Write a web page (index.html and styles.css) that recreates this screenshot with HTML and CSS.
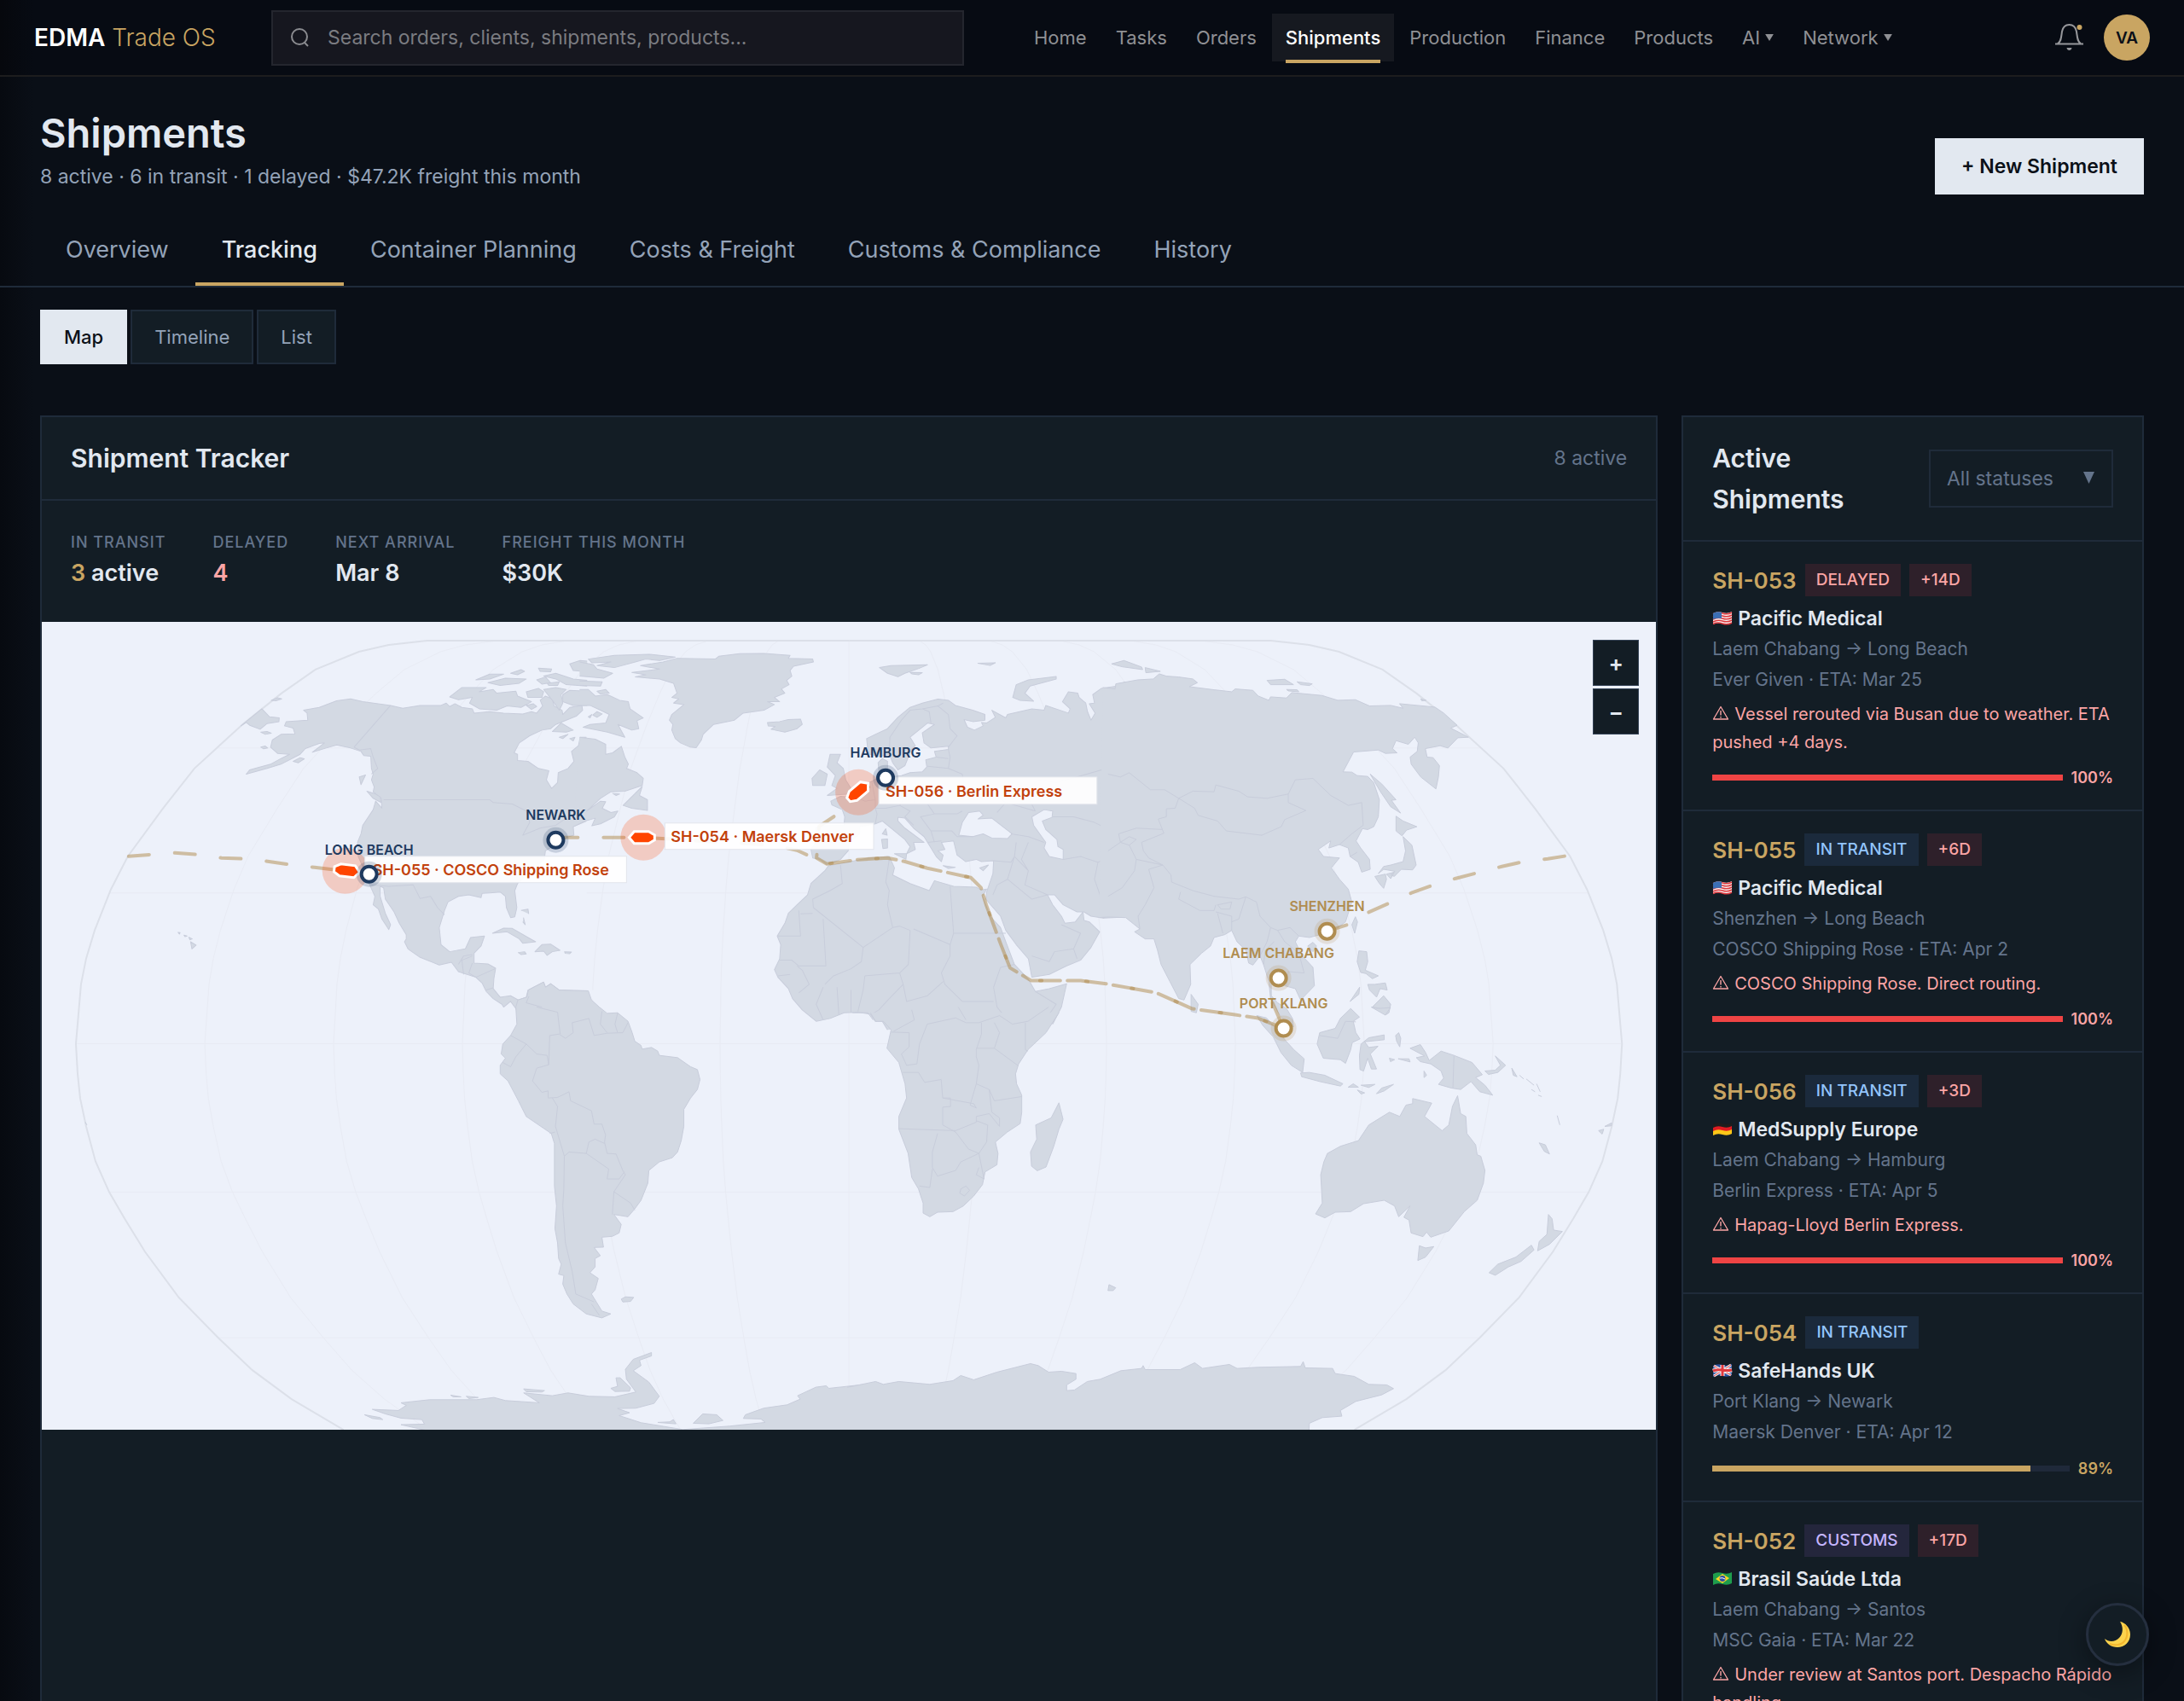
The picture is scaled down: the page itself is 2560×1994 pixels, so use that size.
FILE: index.html
```html
<!DOCTYPE html>
<html lang="en">
<head>
<meta charset="utf-8">
<meta name="viewport" content="width=device-width, initial-scale=1">
<title>EDMA Trade OS – Shipments</title>
<link rel="stylesheet" href="styles.css">
</head>
<body>
<svg class="defs" aria-hidden="true">
  <symbol id="flag-us" viewBox="0 0 24 18">
    <path d="M1 3Q6 0 12 2T23 1V14Q18 17 12 15T1 16Z" fill="#f4f4f4"/>
    <path d="M1 4Q6 1 12 3T23 2M1 7Q6 4 12 6T23 5M1 10Q6 7 12 9T23 8M1 13Q6 10 12 12T23 11M1 15.500Q6 13 12 15T23 14" stroke="#e0393e" stroke-width="1.500" fill="none"/>
    <path d="M1 3Q6 0 11 2V9Q6 8 1 10Z" fill="#3b6fb5"/>
  </symbol>
  <symbol id="flag-de" viewBox="0 0 24 18">
    <path d="M1 3Q6 0 12 2T23 1V6Q18 9 12 7T1 8Z" fill="#1d1d1d"/>
    <path d="M1 7Q6 4 12 6T23 5V10Q18 13 12 11T1 12Z" fill="#e01b22"/>
    <path d="M1 11Q6 8 12 10T23 9V14Q18 17 12 15T1 16Z" fill="#fbc618"/>
  </symbol>
  <symbol id="flag-uk" viewBox="0 0 24 18">
    <path d="M1 3Q6 0 12 2T23 1V14Q18 17 12 15T1 16Z" fill="#2a4f9e"/>
    <path d="M2 3L22 14M22 2L2 15" stroke="#f4f4f4" stroke-width="3"/>
    <path d="M2 3L22 14M22 2L2 15" stroke="#e0393e" stroke-width="1"/>
    <path d="M12 2V15M1 9Q6 7 12 8T23 8" stroke="#f4f4f4" stroke-width="5" fill="none"/>
    <path d="M12 2V15M1 9Q6 7 12 8T23 8" stroke="#e0393e" stroke-width="3" fill="none"/>
  </symbol>
  <symbol id="flag-br" viewBox="0 0 24 18">
    <path d="M1 3Q6 0 12 2T23 1V14Q18 17 12 15T1 16Z" fill="#1f9d4d"/>
    <path d="M4 9L12 3L20 8L12 14Z" fill="#fbd723"/>
    <circle cx="12" cy="8.500" r="3.400" fill="#2c4fa3"/>
    <path d="M9 8Q12 7 15 9" stroke="#fff" fill="none"/>
  </symbol>
  <symbol id="warning" viewBox="0 0 20 17">
    <path d="M10 1.500L18.500 16H1.500Z" fill="none" stroke="currentColor" stroke-width="1.300" stroke-linejoin="round"/>
    <path d="M10 6V11.500M10 13V14.500" stroke="currentColor" stroke-width="1.400"/>
  </symbol>
</svg>

<header class="topbar">
  <a class="logo" href="#"><strong>EDMA</strong> Trade OS</a>
  <label class="search">
    <svg viewBox="0 0 24 24" aria-hidden="true"><circle cx="11" cy="11" r="9"/><path d="M17 18L21 22"/></svg>
    <input type="search" aria-label="Search" placeholder="Search orders, clients, shipments, products...">
  </label>
  <nav class="nav">
    <a href="#">Home</a>
    <a href="#">Tasks</a>
    <a href="#">Orders</a>
    <a href="#" class="active">Shipments</a>
    <a href="#">Production</a>
    <a href="#">Finance</a>
    <a href="#">Products</a>
    <a href="#">AI <svg class="caret" viewBox="0 0 11 9"><path d="M0 0H11L5.500 9Z"/></svg></a>
    <a href="#">Network <svg class="caret" viewBox="0 0 11 9"><path d="M0 0H11L5.500 9Z"/></svg></a>
  </nav>
  <div class="user">
    <button class="bell" aria-label="Notifications">
      <svg viewBox="0 0 36 36"><path d="M1 25.500H34M4 25C8 23 8 18 9 11C10 6 13 3 17.500 3S25 6 26 11C27 18 27 23 31 25"/><path class="clapper" d="M14.500 30H20.500C20 34 15 34 14.500 30Z"/><circle class="dot" cx="29.500" cy="6" r="3"/></svg>
    </button>
    <button class="avatar">VA</button>
  </div>
</header>

<main class="page">
  <div class="page-head">
    <div>
      <h1>Shipments</h1>
      <p>8 active · 6 in transit · 1 delayed · $47.2K freight this month</p>
    </div>
    <button class="primary">+ New Shipment</button>
  </div>

  <nav class="tabs">
    <a href="#">Overview</a>
    <a href="#" class="active">Tracking</a>
    <a href="#">Container Planning</a>
    <a href="#">Costs &amp; Freight</a>
    <a href="#">Customs &amp; Compliance</a>
    <a href="#">History</a>
  </nav>

  <div class="views">
    <button class="active">Map</button>
    <button>Timeline</button>
    <button>List</button>
  </div>

  <div class="columns">
    <section class="card tracker">
      <div class="card-head">
        <h2>Shipment Tracker</h2>
        <span class="count">8 active</span>
      </div>
      <dl class="stats">
        <div><dt>IN TRANSIT</dt><dd><span class="gold">3</span> active</dd></div>
        <div><dt>DELAYED</dt><dd class="red">4</dd></div>
        <div><dt>NEXT ARRIVAL</dt><dd>Mar 8</dd></div>
        <div><dt>FREIGHT THIS MONTH</dt><dd>$30K</dd></div>
      </dl>
      <div class="map">
        <svg class="world" viewBox="0 0 1894 948" role="img" aria-label="World map of shipments">
          <defs>
            <path id="rim" d="M0 22H-495L-540 27L-575 35L-626 56L-666 84L-711 120L-768 172L-805 219L-846 275L-866 314L-885 362L-895 395L-901 425L-905 472L-907 495L-905 530L-902 559L-895 592L-884 633L-868 669L-850 700L-826 739L-786 793L-740 840L-700 878L-654 912L-593 948"/>
            <path id="ship" d="M-15 -3L-8 -7H9L15 0L9 7H-8L-15 3Z"/>
          </defs>

          <g class="graticule" transform="translate(947 0)">
            <use href="#rim" transform="scale(.1667 1)"/><use href="#rim" transform="scale(.3333 1)"/>
            <use href="#rim" transform="scale(.5 1)"/><use href="#rim" transform="scale(.6667 1)"/>
            <use href="#rim" transform="scale(.8333 1)"/>
            <use href="#rim" transform="scale(-.1667 1)"/><use href="#rim" transform="scale(-.3333 1)"/>
            <use href="#rim" transform="scale(-.5 1)"/><use href="#rim" transform="scale(-.6667 1)"/>
            <use href="#rim" transform="scale(-.8333 1)"/>
            <path d="M0 22V948M-742 148H742M-868 318H868M-907 495H907M-868 669H868M-740 840H740"/>
            <use class="rim" href="#rim"/><use class="rim" href="#rim" transform="scale(-1 1)"/>
          </g>

          <!-- North America -->
          <g class="land" transform="translate(-1 -8) scale(.40816 .33333)">
            <path d="M1568 430L1550 430L1545 460L1525 480L1532 515L1515 540L1487 555L1485 590L1468 610L1453 580L1460 548L1430 540L1400 515L1370 512L1370 490L1360 485L1375 450L1405 425L1440 405L1465 400L1480 385L1510 370L1540 355L1557 335L1555 318L1520 325L1500 350L1498 335L1475 320L1470 295L1450 285L1435 300L1442 320L1425 345L1410 340L1385 348L1330 345L1290 340L1245 345L1240 330L1210 325L1190 312L1175 322L1165 310L1150 318L1090 318L1040 328L1005 318L925 305L890 295L850 302L800 325L755 335L765 345L767 370L705 375L700 390L725 398L730 418L690 420L665 440L660 465L680 487L715 490L690 505L660 525L600 545L590 560L650 540L690 525L745 490L760 470L800 452L815 450L780 483L820 468L850 457L890 468L920 480L928 495L948 497L950 540L955 560L950 580L958 605L955 622L978 645L980 680L962 655L955 685L925 740L920 770L910 800L912 850L930 900L945 950L960 990L955 1020L970 1035L980 1070L1000 1107L1005 1090L990 1050L975 990L975 955L985 960L990 1000L1015 1045L1030 1085L1050 1125L1050 1140L1045 1150L1055 1175L1090 1205L1145 1232L1180 1222L1200 1255L1250 1275L1268 1295L1280 1325L1300 1350L1325 1370L1330 1380L1350 1360L1365 1385L1385 1440L1540 1440"/>
            <path class="coast" d="M1568 725L1530 745L1532 775L1505 785L1490 800L1450 830L1447 860L1400 910L1370 945L1362 970L1368 1030L1362 1062L1350 1065L1338 1030L1335 990L1320 975L1290 978L1268 980L1265 995L1230 985L1200 990L1170 1010L1160 1040L1145 1100L1150 1160L1175 1185L1220 1175L1235 1135L1275 1130L1265 1165L1245 1190L1245 1225L1285 1228L1307 1243L1302 1280L1300 1315L1320 1345L1350 1340L1372 1355L1395 1345L1400 1320L1445 1292L1450 1310L1465 1298L1490 1320L1530 1322L1570 1322"/>
            <path d="M1298 1120L1330 1102L1355 1103L1400 1135L1422 1150L1385 1155L1375 1140L1340 1115ZM1420 1185L1440 1160L1465 1158L1492 1180L1470 1185L1455 1198L1445 1183ZM1372 1188L1390 1185L1395 1193L1380 1195ZM1505 1185L1525 1186L1520 1192L1507 1191Z"/>
            <path d="M1380 1040L1400 1035L1402 1052M1387 1065L1392 1090L1385 1080"/>
            <path d="M430 1150L446 1162L434 1175ZM394 1117L400 1118L398 1123ZM411 1127L420 1130L414 1132ZM425 1134L435 1140L428 1143Z"/>
            <path d="M575 390L635 330L657 358L685 362L684 375L650 382L630 402L600 388L590 378ZM662 300L680 291L692 295L675 302ZM632 412L650 410L662 416L645 420ZM632 465L645 461L652 468L640 471ZM725 515L745 502L757 506L740 520Z"/>
            <path d="M915 570L933 563L920 597ZM937 620L962 630L975 640L978 660L955 645Z"/>
            <path d="M1175 288L1210 255L1280 255L1260 270L1300 262L1310 275L1365 268L1370 285L1410 305L1380 325L1340 320L1310 335L1260 330L1232 310L1240 290L1200 298ZM1250 228L1290 208L1330 208L1290 225ZM1285 238L1335 222L1395 225L1375 240L1320 248ZM1350 205L1380 192L1390 198L1370 210ZM1430 187L1468 190L1465 200L1435 198ZM1395 270L1430 258L1445 270L1440 290L1400 290ZM1425 228L1450 218L1465 238L1440 243ZM1445 262L1480 255L1510 262L1495 280L1500 310L1490 335L1470 300ZM1395 318L1415 312L1425 322L1410 332ZM1470 410L1495 380L1530 405L1510 412ZM1490 430L1515 420L1500 435ZM1520 435L1535 430L1530 443ZM1455 240L1490 235L1485 248L1460 248Z"/>
            <path d="M1570 250L1510 245L1480 225L1445 215L1480 205L1530 225L1570 230M1570 200L1530 195L1520 172L1550 160L1570 162M1570 268L1520 265L1500 280L1500 305L1530 318L1570 318"/>
            <path class="border" d="M900 465L1005 318M900 465L915 475L948 470L955 500L968 540L950 560M985 650H1290L1300 660L1355 665L1395 690L1405 730L1385 775L1435 750L1480 740L1510 715M948 950L1000 955L1070 950L1090 998L1120 990L1140 1030L1160 1055M1215 1265L1210 1215L1240 1200M1240 1225L1230 1260L1250 1275L1305 1245M1280 1320L1300 1312M1200 1230L1215 1200L1240 1195"/>
          </g>
          <g class="land" transform="translate(631 -8) scale(.40816 .33333)">
            <path d="M0 430L45 437L75 455L75 490L95 485L120 462L130 500L140 525L135 540L165 555L183 575L180 600L130 620L90 622L60 645L20 690L60 655L75 657L65 680L90 695L110 690L100 710L60 735L35 742L45 715L15 725L-18 745"/>
            <path d="M125 670L180 603L172 635L195 650L195 688L150 680ZM95 628L115 630L105 635Z"/>
            <path d="M0 262L25 262L45 285L80 280L115 300L140 305L145 330L183 362L165 372L170 400L150 405L110 385L130 430L80 412L10 395L30 385L75 380L85 350L60 335L30 318L0 318M38 352L50 340L65 348L50 360ZM0 232L65 235L60 250L0 248M0 165L40 175L50 190L95 205L70 222L0 215M25 155L100 142L200 138L275 148L230 160L190 155L160 165L100 185L50 178L90 165L35 168ZM50 268L75 262L85 275L60 278ZM25 358L35 350L30 362Z"/>
            <path d="M150 202L230 190L175 178L240 165L280 152L390 155L400 145L460 136L530 135L605 142L600 152L670 155L672 165L615 180L605 195L610 215L595 230L602 245L580 260L590 275L560 290L575 305L540 305L560 315L530 335L470 345L445 370L385 385L355 420L350 440L335 467L318 465L290 450L275 435L265 405L268 385L258 370L265 350L300 315L270 310L285 295L265 290L280 275L270 240L230 225L160 218L190 210Z"/>
            <path d="M540 378L575 375L600 368L635 366L640 385L625 400L590 412L550 402L562 392L542 390Z"/>
          </g>

          <!-- South America and the Antarctic Peninsula -->
          <g class="land" transform="translate(-1 452) scale(.61224 .33333)">
            <path class="sea-mask" d="M1025 -60L1045 -58L1060 -20L1070 0L1085 22L1105 20L1125 50V-60Z"/>
            <path d="M914 -25L931 -35L934 -60L963 -88L967 -70L977 -82L993 -60L1049 -57L1055 -25L1070 0L1085 22L1105 20L1125 50L1133 90L1138 120L1150 135L1152 148L1170 142L1182 155L1185 170L1220 178L1245 210L1258 220L1263 255L1258 290L1245 320L1232 360L1232 420L1227 470L1220 510L1210 530L1185 545L1165 575L1163 620L1150 680L1138 710L1125 738L1098 730L1112 765L1108 795L1095 807L1075 810L1078 845L1060 846L1072 875L1062 885L1062 915L1052 935L1068 955L1062 995L1055 1010L1065 1040L1075 1070L1092 1080L1075 1094L1045 1080L1020 1045L1008 1010L1000 975L1002 945L992 940L997 905L992 885L990 830L985 780L988 700L984 630L984 480L978 445L930 385L915 330L895 260L880 235L880 205L890 180L882 165L885 130L900 100L912 60L910 0Z"/>
            <path d="M1112 1028L1120 1020L1136 1022L1130 1036L1115 1038ZM785 1366L805 1372L790 1372ZM815 1370L838 1374L820 1378ZM925 1344L965 1350L960 1355L930 1354ZM1092 1342L1105 1335L1102 1305L1110 1305L1130 1340L1128 1352L1100 1353ZM620 1435L650 1445L655 1452L635 1448ZM1250 1465L1268 1432L1295 1435L1307 1455L1280 1467ZM1182 1462L1205 1460L1212 1452L1217 1467Z"/>
            <path d="M85 405L88 415"/>
            <path d="M738 1490L690 1470L735 1468L730 1452L690 1447L660 1432L635 1416L685 1420L700 1402L690 1393L745 1382L835 1382L868 1374L890 1385L955 1393L925 1358L980 1368L1010 1358L1050 1370L1100 1372L1140 1355L1122 1310L1120 1275L1135 1240L1170 1216L1170 1228L1147 1243L1150 1262L1135 1280L1165 1320L1185 1370L1175 1395L1140 1412L1105 1413L1128 1428L1108 1438L1150 1463L1230 1487L1320 1475L1388 1462L1380 1450L1346 1448L1350 1435L1385 1412L1430 1400L1455 1380L1450 1368L1485 1338L1505 1333L1510 1342L1545 1335L1580 1328L1580 1500"/>
            <path class="border" d="M885 195L900 210L910 175L930 130L950 165L970 170L973 203L950 215L942 260L960 300L972 295L972 320L990 318L1012 298L1015 330L1055 365L1060 412L1075 412L1082 450L1080 475L1085 515L1102 517L1115 575L1120 590L1098 650L1130 690L1138 715M900 100L930 130M973 203L975 100L993 95L1005 110L1020 90L1018 55L1050 40L1060 100L1085 92L1115 90L1125 55M950 0L990 18L995 95M1075 15L1072 60L1085 90M1105 22L1100 60L1105 90M980 320L990 350L986 420L1003 525L1012 510L1045 515L1050 475L1062 465L1080 480M1045 515L1088 570L1085 605L1108 605L1118 580M1003 525L1002 640L1000 700L1005 830L1018 930L1025 1010L1060 1038M1098 650L1095 730M975 445L985 440M1055 1045L1070 1085M935 -38L930 -15L960 0"/>
          </g>

          <!-- Europe, western Asia, northern Africa -->
          <g class="land" transform="translate(631 -8) scale(.40816 .33333)">
            <path d="M1568 235L1545 250L1500 258L1475 280L1480 310L1465 312L1482 345L1470 370L1460 340L1455 310L1436 290L1432 275L1405 270L1388 305L1410 330L1405 345L1340 318L1335 335L1300 330L1265 340L1230 350L1225 362L1185 335L1195 360L1170 380L1155 378L1160 390L1135 405L1115 395L1105 368L1130 375L1165 370L1165 350L1130 335L1080 318L1060 300L1030 296L985 310L950 325L915 360L885 400L850 420L825 435L828 470L835 490L860 498L890 490L900 520L915 545L935 530L945 500L955 470L965 460L950 430L975 405L1000 380L1020 385L985 415L990 450L1010 468L1060 462L1060 473L1020 480L1025 500L995 510L998 535L985 552L950 555L925 565L900 570L885 555L885 515L870 505L858 520L862 570L840 585L800 610L770 640L750 638L722 655L725 668L755 685L762 710L760 740L690 742L678 750L685 790L665 825L670 855L690 860L710 878L730 870L750 860L772 830L775 800L805 770L805 745L850 735L870 725L900 755L935 790L950 815L940 840L965 825L960 800L990 800L935 750L915 725L915 712L935 715L960 750L990 780L1010 820L1025 850L1040 868L1045 845L1030 830L1050 825L1040 800L1075 795L1080 820L1085 845L1110 868L1140 860L1155 868L1190 865L1188 910L1170 975L1168 1000L1178 1015L1210 1060L1225 1110L1255 1160L1290 1210L1300 1275L1350 1265L1400 1235L1440 1215L1470 1170L1495 1115L1465 1080L1450 1075L1447 1045L1425 1080L1395 1085L1385 1060L1360 1020L1345 985L1365 985L1390 1020L1430 1045L1450 1045L1470 1060L1505 1067L1568 1063"/>
            <path class="sea" d="M1090 775L1100 730L1118 695L1150 690L1160 705L1145 718L1185 715L1243 770L1230 787L1185 785L1160 770L1130 780ZM1300 710L1335 685L1360 690L1358 712L1330 725L1340 755L1372 790L1375 815L1390 825L1390 860L1350 850L1335 820L1340 800L1305 740Z"/>
            <path d="M720 490L750 490L740 520L758 540L765 580L780 610L775 630L712 635L740 610L725 600L735 565L712 535ZM670 600L668 575L690 545L712 560L705 600ZM862 185L895 178L1000 175L975 188L935 205L915 217L885 205ZM950 202L985 203L975 210L955 207ZM1145 170L1195 168L1180 177ZM1245 290L1255 245L1290 228L1370 216L1370 225L1295 250L1280 275L1305 303L1265 300ZM870 770L880 752L884 775ZM868 790L885 788L885 820L872 822ZM905 840L940 840L938 860ZM1045 882L1080 888L1060 892ZM1150 890L1175 880L1160 900Z"/>
            <path d="M1360 1440L1385 1380L1400 1298L1350 1315L1310 1325L1290 1282L1250 1230L1225 1150L1210 1100L1180 1060L1158 990L1170 965L1155 968L1140 958L1075 955L1020 935L1005 970L950 945L900 915L905 890L890 850L830 855L770 870L715 883L705 900L665 945L655 985L625 1020L600 1050L590 1085L568 1130L578 1160L575 1210L560 1248L570 1275L600 1315L612 1350L640 1390L680 1430L720 1420L760 1400L800 1398L835 1405L850 1430L870 1430L885 1460"/>
            <path class="border" d="M890 490L892 430L925 370L950 335L985 330L1030 320L1045 310M1010 380L1005 340L985 330M1030 320L1060 350L1065 400L1085 425L1060 465M1060 473L1065 500L1060 540L1000 532M1025 500L1060 505M1060 540L1100 560L1105 600L1080 625L1050 620L970 630L965 580M840 585L845 620L850 650L820 655L790 640M850 650L850 680L880 680L920 670L935 640L970 630M850 680L855 700L850 735M920 670L950 690L935 710L960 740M970 630L960 660L1000 665L1040 640L1050 620M1000 665L1020 700L980 710L1010 760L1020 800M1020 700L1085 700L1100 690M1010 760L1070 760L1085 780M1000 800L1040 795M1105 600L1180 625L1225 660L1200 695M1225 660L1310 690M1240 770L1290 780L1335 800M1255 800L1250 850L1240 870L1190 865M1250 850L1230 930L1200 950L1188 985M1230 930L1300 1000L1345 985M1250 850L1290 900L1280 950L1345 985M1290 900L1270 860L1290 800M1390 860L1440 850L1490 870L1480 930L1500 1000L1530 1040L1505 1067M1490 870L1530 850L1568 850M1360 710L1420 710L1480 730L1530 760L1568 760M1310 690L1280 620L1320 580L1370 590L1430 570L1500 545L1568 565M1300 1200L1350 1220L1365 1185L1420 1175L1430 1210M1420 1175L1440 1120L1385 1090M672 1030L815 1170L900 1100L885 1020L890 970L880 940L890 860M815 1170L810 1220L780 1245L730 1270L705 1300M672 1030L670 1000L720 970L755 945L750 880M630 1040L635 1130H570M670 1050L635 1052M700 1070L708 1235H630L610 1215L575 1215M960 1105L1065 1160V1200L1040 1260L1050 1300L1100 1360M900 1100L920 1095L950 1110L945 1230L920 1260L820 1270M1065 955L1075 1120L1225 1120M1075 1120L1065 1160M920 1260L930 1300L890 1350L860 1390L840 1405M930 1300L940 1360L1000 1340L1045 1290M780 1320L780 1400M740 1310L745 1405M700 1310L680 1370L700 1425M570 1270L605 1265M630 1330L660 1300L640 1250L625 1235M1310 1325L1370 1370L1330 1440M1190 1310L1200 1380L1240 1440M1250 1230L1210 1240L1190 1310M820 1270L815 1320L800 1395M1100 1360L1190 1360M1085 780L1130 780"/>
          </g>

          <!-- Central and eastern Asia -->
          <g class="land" transform="translate(1251 -8) scale(.41455 .33333)">
            <path d="M-15 255L20 260L22 242L85 228L128 225L145 207L165 215L200 218L240 225L253 238L230 252L300 263L350 270L360 260L410 265L425 285L455 300L460 288L505 292L520 273L605 283L650 300L700 298L740 320L800 318L835 328L825 312L925 324L950 345L988 388L970 398L1020 430L990 432L962 468L940 460L898 470L903 500L920 502L938 530L935 570L928 612L885 570L858 525L855 500L875 480L878 450L868 430L850 455L815 442L805 470L818 485L785 487L765 475L695 482L665 552L690 553L705 565L735 568L752 590L768 650L765 710L752 745L735 755L720 752L702 795L715 820L740 860L742 895L718 905L708 870L685 850L680 820L655 808L625 820L630 795L595 825L610 850L655 855L632 890L655 930L680 965L690 1010L672 1080L640 1110L600 1125L570 1135L540 1130L530 1150L550 1200L580 1240L584 1305L545 1355L530 1315L500 1305L475 1260L462 1300L462 1340L480 1365L505 1385L522 1420L525 1450L505 1440L482 1400L460 1350L455 1290L440 1230L430 1200L410 1232L398 1225L390 1180L365 1150L350 1110L330 1125L300 1135L290 1165L265 1190L232 1230L234 1300L215 1355L200 1350L175 1290L150 1230L140 1180L130 1140L105 1140L75 1115L90 1105L75 1090L50 1065L0 1063L-25 1065"/>
            <path d="M235 1335L255 1370L250 1400L235 1395ZM700 1062L706 1080L698 1120L690 1090ZM565 1165L580 1152L590 1165L580 1185ZM815 708L835 725L874 745L845 757L832 777L815 760ZM835 780L860 810L872 880L862 897L830 895L810 920L800 915L812 902L780 895L765 910L780 885L800 880L835 868L842 830ZM755 920L785 912L788 930L780 962L768 945ZM788 912L810 905L800 928ZM742 560L775 595L815 650L802 652L828 697L800 675L770 620ZM710 1182L732 1185L735 1220L728 1250L765 1270L748 1280L730 1262L715 1258L705 1220ZM735 1300L755 1300L785 1295L790 1320L770 1315L760 1345L740 1320ZM748 1380L780 1340L800 1370L795 1400L785 1408L770 1385ZM712 1310L685 1360L710 1335ZM10 172L45 160L95 183L98 192L40 182ZM105 185L148 198L107 203ZM450 230L500 226L525 245L460 245ZM535 235L578 242L570 248L545 245ZM505 262L535 263L540 270L510 267ZM885 295L900 300L888 302Z"/>
            <path class="border" d="M0 560L35 570L60 555L120 615L160 615L200 645L240 620L300 622L305 598L370 620L395 640L450 645L510 630L530 580L580 575L630 635L680 670L718 660L722 740M200 645L245 680L255 705L310 725L335 760L435 775L490 745L500 720L560 688L510 660V630M200 645L190 680L165 682L165 710L142 718L158 768L95 800L100 830L115 855L155 880L178 915L180 940L240 970L300 990L370 1000L390 992L420 1010L430 1060L460 1100L480 1110L515 1100L540 1130M0 830L35 800L30 770L80 750L155 755M35 800L60 780L80 790L60 810ZM60 810L80 860L155 880M80 860L75 900L40 960L0 990M155 880L115 895L130 960L105 1020L85 1060L90 1105M205 975L200 1000L260 1040L300 1040L305 1020M310 1020L350 1010L345 1035L320 1035ZM305 1045L350 1060L350 1110M310 1050L325 1120M390 992L370 1070L350 1080M430 1200L450 1150L460 1100M480 1110L500 1150L540 1190L555 1260L510 1255L505 1305M440 1230L445 1180L470 1150M655 808L690 770L722 740M685 850L705 835"/>
          </g>

          <!-- Southern Africa, Oceania, eastern Antarctica -->
          <g class="land" transform="translate(951 452) scale(.60588 .33333)">
            <path d="M35 20L45 50L60 50L75 80L67 145L90 195L102 270L105 320L90 385L90 430L108 515L115 600L128 640L137 690L137 725L150 738L165 722L195 720L215 700L235 665L252 625L257 580L280 555L282 515L277 475L300 440L325 410L328 370L328 310L318 270L316 235L322 200L340 150L375 90L400 20"/>
            <path d="M400 337L408 395L400 430L390 490L375 563L358 576L347 560L345 510L357 465L355 415L385 390ZM497 977L510 988L505 998L495 998Z"/>
            <path d="M783 30L802 38L815 65L840 120L855 150L875 182L872 230L850 205L830 160L815 105L795 65ZM868 232L885 230L915 240L950 270L945 278L905 262L870 245ZM965 5L982 35L970 50L975 90L983 112L968 125L965 150L955 198L945 185L912 180L900 130L905 90L935 75L945 40ZM985 130L1000 108L1030 98L1030 115L992 122L1000 142L1018 138L1003 165L1015 218L1005 218L998 180L990 225L983 220L982 170ZM960 282L970 270L980 282ZM985 275L1012 272L1000 283ZM978 292L992 302L985 306ZM1015 305L1025 285L1048 272L1030 295ZM1040 180L1050 185L1042 192ZM1057 182L1078 182L1080 193ZM1052 100L1058 90L1062 110L1060 140L1054 120ZM1107 225L1112 240L1107 248ZM1005 0L1018 5L1042 2L1032 28Z"/>
            <path d="M1080 145L1100 132L1110 160L1117 188L1140 155L1165 170L1200 195L1220 238L1207 248L1225 275L1240 310L1215 298L1198 262L1178 290L1160 285L1135 272L1145 250L1140 225L1120 200L1100 192L1092 178L1108 172ZM1225 225L1245 222L1255 205L1245 172L1265 205L1250 230L1232 237ZM1277 215L1287 245L1280 240ZM1292 240L1300 253M1305 253L1320 275M1315 290L1322 298M1325 270L1332 298M1328 310L1335 315M1365 382L1370 415M1457 420L1470 408L1470 418ZM1445 435L1455 430L1452 447ZM1330 478L1342 485L1350 517L1340 508Z"/>
            <path d="M1172 312L1178 375L1188 385L1190 445L1207 485L1210 520L1217 525L1225 575L1222 620L1210 680L1185 720L1155 788L1120 810L1112 792L1105 808L1082 795L1078 750L1068 740L1080 700L1058 738L1050 700L1030 680L990 692L965 720L935 722L915 742L897 728L910 690L907 590L913 545L920 515L945 490L980 470L1000 415L1040 370L1060 385L1072 345L1085 340L1085 322L1122 338L1108 385L1142 435L1155 415L1162 350ZM1098 840L1110 848L1126 843L1110 880L1095 892ZM1348 730L1355 745L1358 785L1375 790L1350 835L1327 858L1330 825L1345 800ZM1315 838L1320 855L1295 895L1270 915L1245 944L1233 935L1250 905L1285 880Z"/>
            <path d="M-10 1338L0 1335L45 1318L60 1328L90 1318L150 1328L195 1315L210 1297L235 1312L280 1285L345 1255L360 1262L380 1285L405 1282L433 1290L433 1310L415 1330L415 1350L430 1348L455 1318L480 1310L520 1280L560 1272L563 1262L567 1276L635 1276L663 1252L678 1272L730 1258L745 1272L785 1268L868 1265L873 1248L877 1270L930 1272L935 1290L972 1300L1000 1328L1035 1330L1048 1343L1025 1365L975 1388L945 1420L948 1440L910 1445L885 1465L884 1500L-10 1500"/>
            <path class="border" d="M75 88L110 90L110 140L95 165L105 205L125 200L130 130L145 60L200 38L220 55L245 55L285 30M205 0L220 45M285 30L310 60L340 50L380 0M250 55V95L240 150V175L245 205L240 270L228 345L240 355L235 340L175 320L172 255L140 265L128 230H98M275 55L285 90L275 145L240 145M275 145L320 205M335 55V150L340 155M240 270L265 290L275 330L328 315M265 290L270 370L285 390L285 420L265 375L240 385L240 405L200 435L90 428M175 320L190 320V350L175 352V415L200 440M240 400L262 415L260 475L245 515L210 545L200 575L165 595L155 565L155 510L165 445M200 440L225 500L245 515L250 560L255 605L240 590L245 565M155 570L150 635L130 630M210 640L220 630L227 645L217 665L208 655ZM0 20L30 20L40 45M115 10L120 45L80 85M905 100L940 110L955 50L975 52M1165 172L1163 285"/>
          </g>

          <g class="routes">
            <path d="M1508 363L1533 355L1556 341L1583 329L1607 318L1632 309L1659 301L1686 294L1713 287L1740 281L1767 278L1792 274"/>
            <path d="M102 275L128 273L156 271L183 273L211 277L238 278L265 281L293 285L320 288L346 291"/>
            <path d="M1457 477L1427 465L1400 461L1350 454L1307 435L1251 425L1219 421H1161L1136 406L1125 378L1108 332L1102 312L1090 300L1039 289L1012 281L992 277L957 279L921 284L886 268L857 262L706 253H603"/>
            <path stroke-dashoffset="21" d="M1451 417L1441 440L1457 477L1427 465L1400 461L1350 454L1307 435L1251 425L1219 421H1161L1136 406L1125 378L1108 332L1102 312L1090 300L1039 289L1012 281L992 277L957 279L921 284L909 277L912 240L939 222L958 200L990 183"/>
          </g>

          <g class="vessels">
            <circle class="halo" cx="356" cy="292" r="27"/>
            <circle class="halo" cx="706" cy="253" r="27"/>
            <circle class="halo" cx="958" cy="200" r="27"/>
            <rect x="379" y="275" width="307" height="31"/>
            <rect x="731" y="236" width="245" height="31"/>
            <rect x="982" y="182" width="256" height="32"/>
            <text x="388" y="297">SH-055 · COSCO Shipping Rose</text>
            <text x="738" y="258">SH-054 · Maersk Denver</text>
            <text x="990" y="205">SH-056 · Berlin Express</text>
            <use href="#ship" transform="translate(358 292) rotate(7)"/>
            <use href="#ship" transform="translate(704 253) rotate(180)"/>
            <use href="#ship" transform="translate(958 199) rotate(-40)"/>
          </g>

          <g class="ports dest">
            <circle class="glow" cx="384" cy="296" r="15"/><circle cx="384" cy="296" r="9"/>
            <circle class="glow" cx="603" cy="256" r="15"/><circle cx="603" cy="256" r="9"/>
            <circle class="glow" cx="990" cy="183" r="15"/><circle cx="990" cy="183" r="9"/>
            <text x="384" y="273">LONG BEACH</text>
            <text x="603" y="232">NEWARK</text>
            <text x="990" y="159">HAMBURG</text>
          </g>
          <g class="ports origin">
            <circle class="glow" cx="1508" cy="363" r="15"/><circle cx="1508" cy="363" r="9"/>
            <circle class="glow" cx="1451" cy="418" r="15"/><circle cx="1451" cy="418" r="9"/>
            <circle class="glow" cx="1457" cy="477" r="15"/><circle cx="1457" cy="477" r="9"/>
            <text x="1508" y="339">SHENZHEN</text>
            <text x="1451" y="394">LAEM CHABANG</text>
            <text x="1457" y="453">PORT KLANG</text>
          </g>
        </svg>
        <div class="zoom">
          <button aria-label="Zoom in">+</button>
          <button aria-label="Zoom out">−</button>
        </div>
      </div>
    </section>

    <section class="card list">
      <div class="card-head">
        <h2>Active Shipments</h2>
        <span class="select">
          <select aria-label="Status filter"><option>All statuses</option></select>
          <svg viewBox="0 0 13 14" aria-hidden="true"><path d="M0 0H13L6.500 14Z"/></svg>
        </span>
      </div>

      <article class="item">
        <div class="tags"><a href="#">SH-053</a><span class="tag late">DELAYED</span><span class="tag late">+14D</span></div>
        <h3><svg class="flag"><use href="#flag-us"/></svg>Pacific Medical</h3>
        <p>Laem Chabang → Long Beach</p>
        <p>Ever Given · ETA: Mar 25</p>
        <p class="alert"><svg class="warn"><use href="#warning"/></svg>Vessel rerouted via Busan due to weather. ETA pushed +4 days.</p>
        <div class="progress late"><div class="track"><div class="fill" style="width:100%"></div></div><span>100%</span></div>
      </article>

      <article class="item">
        <div class="tags"><a href="#">SH-055</a><span class="tag transit">IN TRANSIT</span><span class="tag late">+6D</span></div>
        <h3><svg class="flag"><use href="#flag-us"/></svg>Pacific Medical</h3>
        <p>Shenzhen → Long Beach</p>
        <p>COSCO Shipping Rose · ETA: Apr 2</p>
        <p class="alert"><svg class="warn"><use href="#warning"/></svg>COSCO Shipping Rose. Direct routing.</p>
        <div class="progress late"><div class="track"><div class="fill" style="width:100%"></div></div><span>100%</span></div>
      </article>

      <article class="item">
        <div class="tags"><a href="#">SH-056</a><span class="tag transit">IN TRANSIT</span><span class="tag late">+3D</span></div>
        <h3><svg class="flag"><use href="#flag-de"/></svg>MedSupply Europe</h3>
        <p>Laem Chabang → Hamburg</p>
        <p>Berlin Express · ETA: Apr 5</p>
        <p class="alert"><svg class="warn"><use href="#warning"/></svg>Hapag-Lloyd Berlin Express.</p>
        <div class="progress late"><div class="track"><div class="fill" style="width:100%"></div></div><span>100%</span></div>
      </article>

      <article class="item">
        <div class="tags"><a href="#">SH-054</a><span class="tag transit">IN TRANSIT</span></div>
        <h3><svg class="flag"><use href="#flag-uk"/></svg>SafeHands UK</h3>
        <p>Port Klang → Newark</p>
        <p>Maersk Denver · ETA: Apr 12</p>
        <div class="progress"><div class="track"><div class="fill" style="width:89%"></div></div><span>89%</span></div>
      </article>

      <article class="item">
        <div class="tags"><a href="#">SH-052</a><span class="tag customs">CUSTOMS</span><span class="tag late">+17D</span></div>
        <h3><svg class="flag"><use href="#flag-br"/></svg>Brasil Saúde Ltda</h3>
        <p>Laem Chabang → Santos</p>
        <p>MSC Gaia · ETA: Mar 22</p>
        <p class="alert"><svg class="warn"><use href="#warning"/></svg>Under review at Santos port. Despacho Rápido handling.</p>
      </article>
    </section>
  </div>
</main>

<button class="theme" aria-label="Toggle theme">
  <svg viewBox="0 0 32 32"><path d="M19 1C25 2 31 8 31 16C31 25 24 31 16 31C9 31 3 27 1 21C6 25 13 25 18 20C23 15 23 7 19 1Z" fill="#fcd34d"/><path d="M24 5C28 9 29 18 24 24C20 29 12 29 7 27" fill="none" stroke="#f3b72f" stroke-width="2"/></svg>
</button>
</body>
</html>
```

FILE: styles.css
```css
:root {
  --bg: #0a0f17;
  --card: #131d25;
  --line: #1f2b3a;
  --text: #e2e8f0;
  --muted: #94a3b8;
  --dim: #64748b;
  --gold: #c9a562;
  --red: #fca5a5;
  --ink: #0b1018;
}

* { box-sizing: border-box; margin: 0; padding: 0; }

body {
  height: 100vh;
  display: flex;
  flex-direction: column;
  background: linear-gradient(90deg, #070a10, var(--bg) 40px);
  color: var(--text);
  font-family: Inter, "Liberation Sans", sans-serif;
  font-size: 22px;
}

button, input, select { font: inherit; color: inherit; border: 0; background: none; }
a { color: inherit; text-decoration: none; }
.defs { position: absolute; width: 0; height: 0; }

/* Top bar */
.topbar {
  display: flex;
  align-items: center;
  flex: none;
  height: 90px;
  padding: 0 40px;
  background: linear-gradient(90deg, #06080d, #070b13 40px);
  border-bottom: 2px solid #1d1d1e;
}
.logo { flex: none; width: 278px; font-size: 28px; font-weight: 300; color: var(--gold); }
.logo strong { font-weight: 600; color: #fff; }
.search {
  display: flex;
  align-items: center;
  gap: 20px;
  width: 812px;
  height: 65px;
  padding: 0 20px;
  background: #16171f;
  border: 2px solid #24262e;
}
.search svg { width: 24px; height: 24px; fill: none; stroke: #8b8c90; stroke-width: 2; }
.search input { flex: 1; outline: 0; font-size: 23px; }
.search input::placeholder { color: #7b7c81; opacity: 1; }
.nav { display: flex; gap: 2px; margin-left: 66px; }
.nav a {
  position: relative;
  display: flex;
  align-items: center;
  gap: 6px;
  height: 56px;
  padding: 0 16px;
  color: #8f9094;
}
.nav .active { background: #161920; color: #fff; font-weight: 500; }
.nav .active::after {
  content: "";
  position: absolute;
  left: 16px;
  right: 16px;
  bottom: -2px;
  height: 4px;
  background: var(--gold);
}
.caret { width: 10px; height: 8px; fill: currentColor; }
.user { display: flex; align-items: center; gap: 22px; margin-left: auto; }
.bell svg { display: block; width: 36px; height: 36px; fill: none; stroke: #96979b; stroke-width: 2; }
.bell .clapper { fill: #96979b; stroke: none; }
.bell .dot { fill: var(--gold); stroke: none; }
.avatar {
  width: 54px;
  height: 54px;
  border-radius: 50%;
  background: var(--gold);
  color: var(--ink);
  font-size: 19px;
  font-weight: 600;
}

/* Page heading */
.page { flex: 1; overflow: hidden; }
.page-head {
  display: flex;
  justify-content: space-between;
  align-items: flex-end;
  padding: 36px 47px 20px;
}
h1 { font-size: 47px; line-height: 60px; font-weight: 600; }
.page-head p { margin: 4px 0; font-size: 23px; line-height: 34px; color: var(--muted); }
.primary {
  height: 66px;
  padding: 0 31px;
  background: var(--text);
  color: var(--ink);
  font-size: 23px;
  font-weight: 600;
}

.tabs { display: flex; padding: 0 46px; border-bottom: 2px solid var(--line); }
.tabs a {
  height: 87px;
  padding: 0 31px;
  border-bottom: 4px solid transparent;
  font-size: 27px;
  line-height: 90px;
  color: var(--muted);
}
.tabs .active { color: var(--text); font-weight: 500; border-color: var(--gold); }

.views { display: flex; gap: 4px; padding: 26px 47px 60px; }
.views button {
  height: 64px;
  padding: 0 26px;
  background: var(--card);
  border: 2px solid var(--line);
  color: var(--muted);
}
.views .active { background: var(--text); border-color: var(--text); color: var(--ink); font-weight: 500; }

/* Cards */
.columns { display: grid; grid-template-columns: minmax(0, 7fr) minmax(0, 2fr); gap: 28px; padding: 0 47px; }
.card { background: var(--card); border: 2px solid var(--line); }
.card-head {
  display: flex;
  justify-content: space-between;
  align-items: center;
  gap: 24px;
  padding: 24px 34px;
  border-bottom: 2px solid var(--line);
}
h2 { font-size: 30px; line-height: 48px; font-weight: 600; }
.count { font-size: 23px; color: var(--dim); }

.stats { display: flex; gap: 55px; padding: 32px 34px 38px; }
.stats dt { font-size: 18px; line-height: 34px; font-weight: 500; letter-spacing: 1px; color: var(--dim); }
.stats dd { font-size: 27px; line-height: 38px; font-weight: 600; }
.stats .gold { color: var(--gold); }
.stats .red { color: var(--red); }

/* Map */
.map { position: relative; background: #edf1fa; }
.world { display: block; width: 100%; height: auto; }
.world path, .world use { vector-effect: non-scaling-stroke; }
.graticule { fill: none; stroke: #e8ebf4; stroke-width: 1; }
.graticule .rim { stroke: #dce0e9; stroke-width: 2; }
.land path { fill: #d3d9e3; stroke: #c8cddb; stroke-width: 1; stroke-linejoin: round; }
.land .border { fill: none; }
.land .sea, .land .coast { fill: #edf1fa; }
.land .sea-mask { fill: #edf1fa; stroke: none; }
.routes { fill: none; stroke: #b0894a; stroke-opacity: .5; stroke-width: 4; stroke-linecap: round; stroke-linejoin: round; stroke-dasharray: 24 30; }
.vessels .halo { fill: #ff4500; fill-opacity: .22; }
.vessels rect { fill: #fff; fill-opacity: .92; stroke: #e2e5ec; }
.vessels text { font-size: 18px; font-weight: 600; fill: #c2410c; }
.vessels use { fill: #ff4500; stroke: #fff; stroke-width: 3; }
.ports circle { fill: #fff; stroke: currentColor; stroke-width: 4; }
.ports .glow { fill: currentColor; fill-opacity: .18; stroke: none; }
.ports text { font-size: 16px; font-weight: 600; text-anchor: middle; fill: currentColor; }
.dest { color: #1e3a5f; }
.origin { color: #b08d50; }
.zoom { position: absolute; top: 21px; right: 20px; display: grid; gap: 3px; }
.zoom button {
  width: 54px;
  height: 54px;
  background: var(--card);
  border: 1px solid #334155;
  font-size: 26px;
  font-weight: 600;
}

/* Shipment list */
.select { position: relative; flex: none; }
.select select {
  display: block;
  width: 216px;
  height: 68px;
  padding: 0 19px;
  appearance: none;
  border: 2px solid var(--line);
  background: var(--card);
  color: var(--dim);
  font-size: 23px;
}
.select svg { position: absolute; right: 22px; top: 26px; width: 13px; height: 14px; fill: var(--dim); }
.item { padding: 26px 34px 22px; border-bottom: 2px solid var(--line); }
.tags { display: flex; align-items: center; gap: 10px; height: 38px; margin-bottom: 8px; }
.tags a { font-size: 26px; font-weight: 600; color: var(--gold); }
.tag { padding: 0 13px; font-size: 19px; line-height: 38px; font-weight: 500; }
.tag.late { background: #2e202a; color: var(--red); }
.tag.transit { background: #1b2a3c; color: #93c5fd; }
.tag.customs { background: #24263c; color: #c4b5fd; }
h3 { display: flex; align-items: center; gap: 6px; font-size: 23px; line-height: 36px; font-weight: 600; }
.flag { width: 24px; height: 18px; }
.item p { font-size: 21px; line-height: 36px; color: var(--dim); }
.item .alert { margin-top: 6px; font-size: 20px; line-height: 33px; color: var(--red); }
.warn { width: 20px; height: 17px; margin-right: 6px; }
.progress { display: flex; align-items: center; gap: 10px; height: 32px; margin-top: 8px; color: var(--gold); font-size: 18px; font-weight: 600; }
.track { flex: 1; height: 7px; background: #1f293a; }
.fill { height: 100%; background: var(--gold); }
.progress.late { color: var(--red); }
.progress.late .fill { background: #ef4444; }

.theme {
  position: fixed;
  right: 41px;
  bottom: 41px;
  display: grid;
  place-items: center;
  width: 74px;
  height: 74px;
  border: 3px solid #252f3f;
  border-radius: 50%;
  background: var(--card);
  box-shadow: 0 8px 32px rgb(0 0 0 / .4);
}
.theme svg { width: 32px; height: 32px; }
```
